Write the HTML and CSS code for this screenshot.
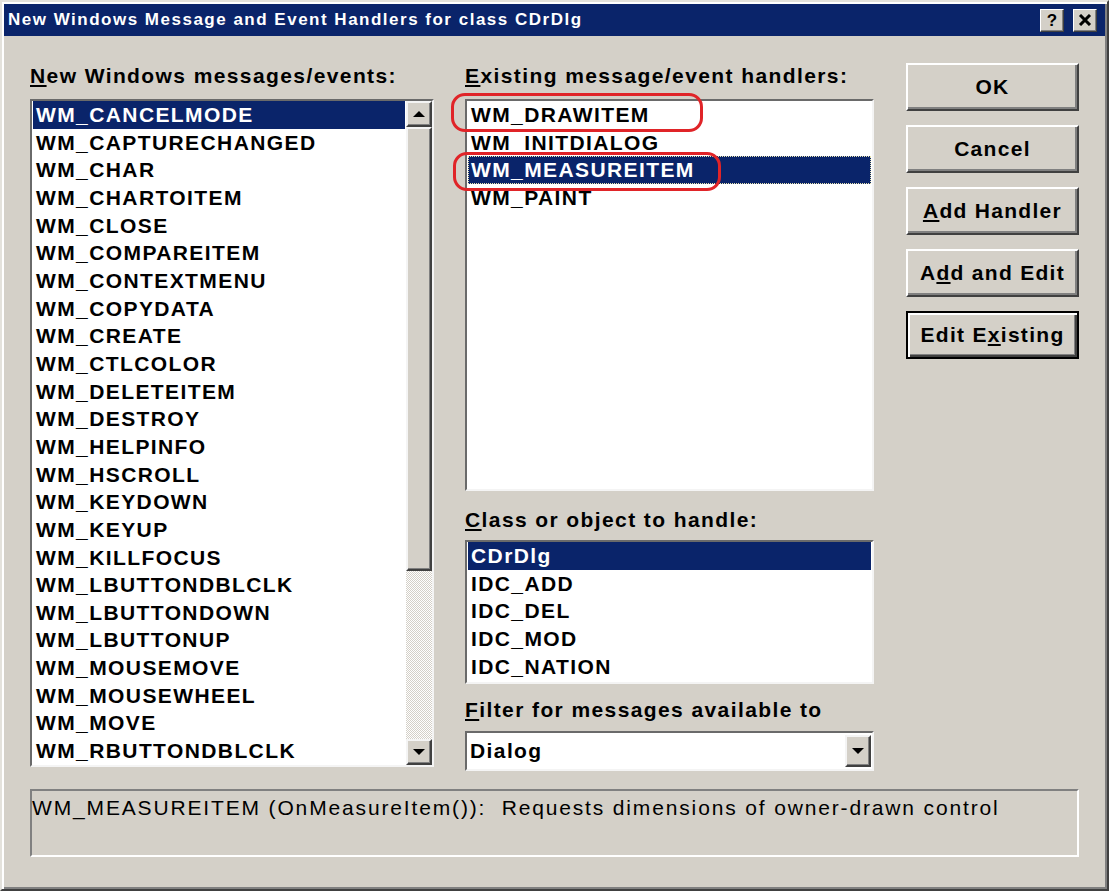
FILE: index.html
```html
<!DOCTYPE html>
<html>
<head>
<meta charset="utf-8">
<link rel="stylesheet" href="styles.css">
</head>
<body>
<div class="window">
  <div class="titlebar">
    <span class="title">New Windows Message and Event Handlers for class CDrDlg</span>
    <div class="tb-buttons">
      <span class="tb-btn tb-help">?</span>
      <span class="tb-btn tb-close"><svg width="14" height="12" viewBox="0 0 14 12"><path d="M2 1 L12 11 M12 1 L2 11" stroke="#000" stroke-width="3" fill="none"/></svg></span>
    </div>
  </div>
  <div class="body">
    <div class="columns">
      <div class="col col-left">
        <div class="label"><u>N</u>ew Windows messages/events:</div>
        <div class="listbox listbox-left">
          <div class="items">
            <div class="item selected">WM_CANCELMODE</div>
            <div class="item">WM_CAPTURECHANGED</div>
            <div class="item">WM_CHAR</div>
            <div class="item">WM_CHARTOITEM</div>
            <div class="item">WM_CLOSE</div>
            <div class="item">WM_COMPAREITEM</div>
            <div class="item">WM_CONTEXTMENU</div>
            <div class="item">WM_COPYDATA</div>
            <div class="item">WM_CREATE</div>
            <div class="item">WM_CTLCOLOR</div>
            <div class="item">WM_DELETEITEM</div>
            <div class="item">WM_DESTROY</div>
            <div class="item">WM_HELPINFO</div>
            <div class="item">WM_HSCROLL</div>
            <div class="item">WM_KEYDOWN</div>
            <div class="item">WM_KEYUP</div>
            <div class="item">WM_KILLFOCUS</div>
            <div class="item">WM_LBUTTONDBLCLK</div>
            <div class="item">WM_LBUTTONDOWN</div>
            <div class="item">WM_LBUTTONUP</div>
            <div class="item">WM_MOUSEMOVE</div>
            <div class="item">WM_MOUSEWHEEL</div>
            <div class="item">WM_MOVE</div>
            <div class="item">WM_RBUTTONDBLCLK</div>
          </div>
          <div class="vscroll">
            <div class="sb-btn"><span class="arrow-up"></span></div>
            <div class="sb-thumb"></div>
            <div class="sb-track"></div>
            <div class="sb-btn"><span class="arrow-down"></span></div>
          </div>
        </div>
      </div>

      <div class="col col-mid">
        <div class="label"><u>E</u>xisting message/event handlers:</div>
        <div class="listbox listbox-handlers">
          <div class="items">
            <div class="item">WM_DRAWITEM</div>
            <div class="item">WM_INITDIALOG</div>
            <div class="item selected focused">WM_MEASUREITEM</div>
            <div class="item">WM_PAINT</div>
          </div>
          <div class="mark mark-1"></div>
          <div class="mark mark-2"></div>
        </div>
        <div class="label label-class"><u>C</u>lass or object to handle:</div>
        <div class="listbox listbox-class">
          <div class="items">
            <div class="item selected">CDrDlg</div>
            <div class="item">IDC_ADD</div>
            <div class="item">IDC_DEL</div>
            <div class="item">IDC_MOD</div>
            <div class="item">IDC_NATION</div>
          </div>
        </div>
        <div class="label label-filter"><u>F</u>ilter for messages available to</div>
        <div class="combo">
          <span class="combo-text">Dialog</span>
          <span class="combo-btn"><span class="arrow-down"></span></span>
        </div>
      </div>

      <div class="col col-right">
        <div class="btn">OK</div>
        <div class="btn">Cancel</div>
        <div class="btn"><u>A</u>dd Handler</div>
        <div class="btn">A<u>d</u>d and Edit</div>
        <div class="btn btn-default">Edit E<u>x</u>isting</div>
      </div>
    </div>
    <div class="desc">WM_MEASUREITEM (OnMeasureItem()):&nbsp; Requests dimensions of owner-drawn control</div>
  </div>
</div>
</body>
</html>
```
FILE: styles.css
```css
html, body {
  margin: 0;
  padding: 0;
  background: #d4d0c8;
}

.window {
  width: 1109px;
  height: 891px;
  box-sizing: border-box;
  background: #d4d0c8;
  border: 2px solid;
  border-color: #e4e2dc #404040 #404040 #e4e2dc;
  box-shadow: inset 2px 2px 0 #ffffff, inset -2px -2px 0 #808080;
  padding: 2px;
  font-family: "Liberation Sans", Arial, sans-serif;
  color: #000;
}

.titlebar {
  height: 32px;
  background: #0a246a;
  display: flex;
  align-items: center;
  justify-content: space-between;
  padding: 0 8px 0 4px;
}

.title {
  color: #fff;
  font-weight: bold;
  font-size: 17px;
  letter-spacing: 1.5px;
  white-space: nowrap;
}

.tb-buttons {
  display: flex;
  gap: 9px;
}

.tb-btn {
  width: 24px;
  height: 23px;
  box-sizing: border-box;
  background: #d4d0c8;
  border: 1px solid;
  border-color: #fff #404040 #404040 #fff;
  box-shadow: inset -1px -1px 0 #808080;
  display: flex;
  align-items: center;
  justify-content: center;
  font-weight: bold;
  font-size: 17px;
  line-height: 1;
}

.body {
  padding: 28px 0 0 26px;
}

.columns {
  display: flex;
  align-items: flex-start;
}

.col-left { width: 404px; }
.col-mid { width: 409px; margin-left: 31px; }
.col-right {
  width: 173px;
  margin-left: 32px;
  margin-top: -1px;
  display: flex;
  flex-direction: column;
  gap: 14px;
}

.label {
  font-size: 21px;
  font-weight: bold;
  letter-spacing: 1.4px;
  line-height: 24px;
  height: 24px;
  white-space: nowrap;
  margin-bottom: 11px;
}

u {
  text-decoration-thickness: 2px;
  text-underline-offset: 2px;
}

.label-class { margin-top: 17px; margin-bottom: 8px; }
.label-filter { margin-top: 14px; margin-bottom: 9px; }

.listbox {
  position: relative;
  box-sizing: border-box;
  background: #fff;
  border: 2px solid;
  border-color: #6a6a6a #f4f4f4 #f4f4f4 #6a6a6a;
  display: flex;
}

.listbox-left { height: 668px; }
.listbox-handlers { height: 392px; }
.listbox-class { height: 144px; }

.items {
  flex: 1;
  padding-left: 1px;
  padding-right: 1px;
}

.item {
  height: 27.67px;
  line-height: 27.67px;
  font-size: 21px;
  font-weight: bold;
  letter-spacing: 1.4px;
  padding-left: 3px;
  white-space: nowrap;
  box-sizing: border-box;
}

.item.selected {
  background: #0a246a;
  color: #fff;
}

.item.focused {
  outline: 1px dotted #e8e4b0;
  outline-offset: -1px;
}

.vscroll {
  width: 26px;
  display: flex;
  flex-direction: column;
  background: #d4d0c8;
}

.sb-btn {
  width: 26px;
  height: 26px;
  box-sizing: border-box;
  background: #d4d0c8;
  border: 2px solid;
  border-color: #f4f4f4 #404040 #404040 #f4f4f4;
  box-shadow: inset -1px -1px 0 #808080;
  display: flex;
  align-items: center;
  justify-content: center;
}

.sb-thumb {
  height: 444px;
  box-sizing: border-box;
  background: #d4d0c8;
  border: 2px solid;
  border-color: #f4f4f4 #404040 #404040 #f4f4f4;
  box-shadow: inset -1px -1px 0 #808080;
}

.sb-track {
  flex: 1;
  background: repeating-conic-gradient(#d4d0c8 0 25%, #ffffff 0 50%) 0 0 / 2px 2px;
}

.arrow-up {
  width: 0;
  height: 0;
  border-left: 6px solid transparent;
  border-right: 6px solid transparent;
  border-bottom: 6px solid #000;
}

.arrow-down {
  width: 0;
  height: 0;
  border-left: 6px solid transparent;
  border-right: 6px solid transparent;
  border-top: 6px solid #000;
}

.mark {
  position: absolute;
  border: 3px solid #e02428;
  border-radius: 14px;
  box-sizing: border-box;
}

.mark-1 { left: -16px; top: -8px; width: 252px; height: 39px; }
.mark-2 { left: -14px; top: 51px; width: 268px; height: 39px; }

.combo {
  height: 40px;
  box-sizing: border-box;
  background: #fff;
  border: 2px solid;
  border-color: #6a6a6a #f4f4f4 #f4f4f4 #6a6a6a;
  display: flex;
  align-items: center;
  justify-content: space-between;
  padding: 2px 1px 2px 3px;
}

.combo-text {
  font-size: 21px;
  font-weight: bold;
  letter-spacing: 1.4px;
}

.combo-btn {
  width: 26px;
  height: 32px;
  box-sizing: border-box;
  background: #d4d0c8;
  border: 2px solid;
  border-color: #f4f4f4 #404040 #404040 #f4f4f4;
  box-shadow: inset -1px -1px 0 #808080;
  display: flex;
  align-items: center;
  justify-content: center;
}

.btn {
  height: 48px;
  box-sizing: border-box;
  background: #d4d0c8;
  border: 2px solid;
  border-color: #ffffff #404040 #404040 #ffffff;
  box-shadow: inset -2px -2px 0 #808080;
  display: flex;
  align-items: center;
  justify-content: center;
  font-size: 21px;
  font-weight: bold;
  letter-spacing: 1.3px;
  white-space: nowrap;
}

.btn-default {
  border-color: #000;
  box-shadow: inset 2px 2px 0 #ffffff, inset -2px -2px 0 #404040, inset -3px -3px 0 #808080;
}

.desc {
  margin-top: 18px;
  width: 1049px;
  height: 68px;
  box-sizing: border-box;
  border: 2px solid;
  border-color: #808080 #ffffff #ffffff #808080;
  padding: 5px 0 0 0;
  font-size: 21px;
  line-height: 24px;
  letter-spacing: 1.85px;
  white-space: nowrap;
}
```
